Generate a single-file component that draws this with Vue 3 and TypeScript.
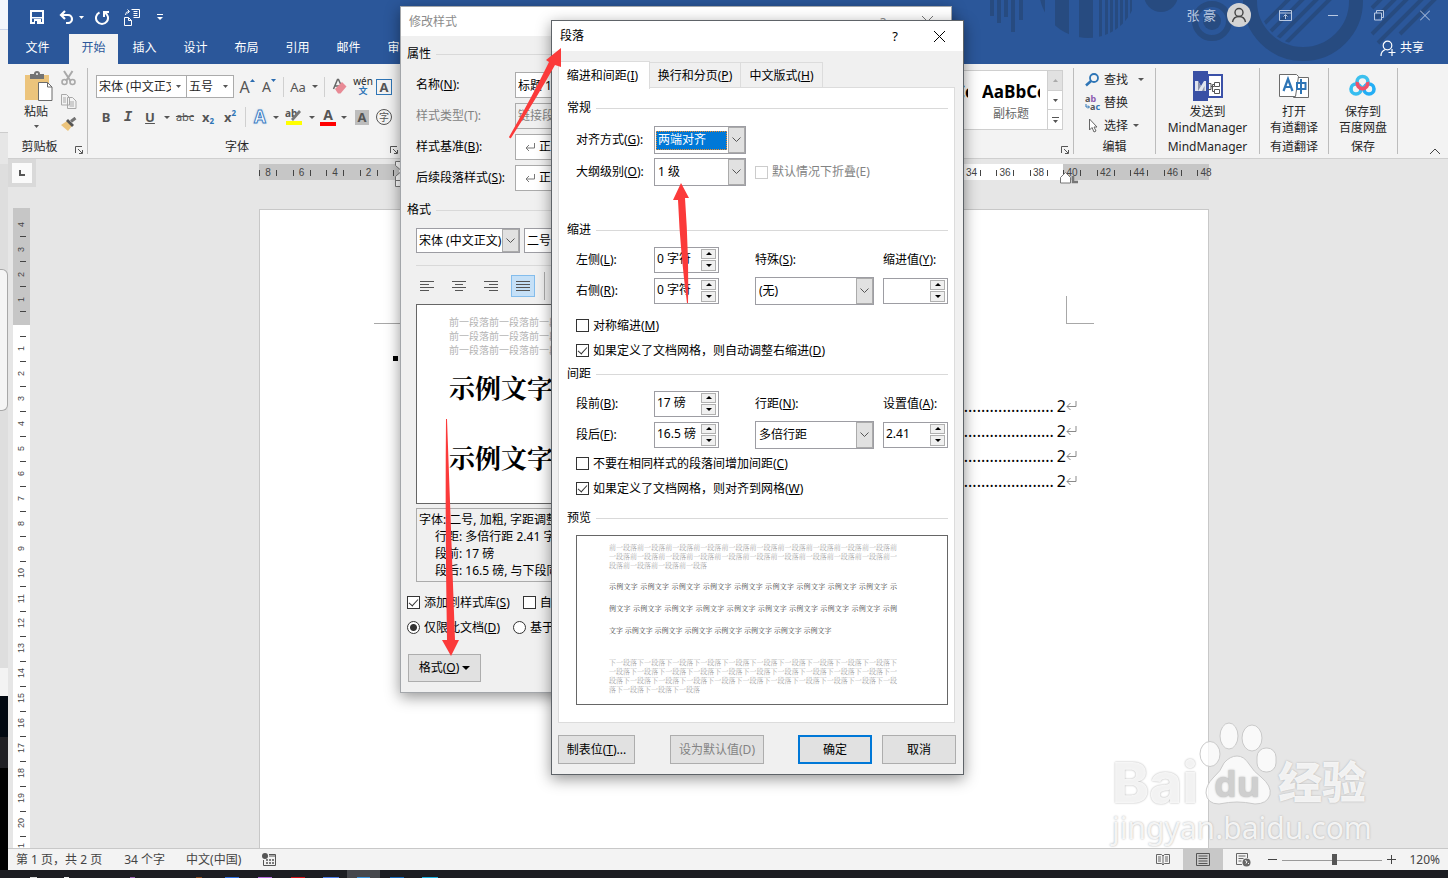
<script setup lang="ts">
import { ref } from 'vue'

const tabs = ['开始', '插入', '设计', '布局', '引用', '邮件', '审阅']
const fontName = ref('宋体 (中文正文)')
const fontSize = ref('五号')
const styleName = ref('标题 1')
const left = ref('0 字符')
const right = ref('0 字符')
const indentBy = ref('')
const before = ref('17 磅')
const after = ref('16.5 磅')
const spacingAt = ref('2.41')
const zoom = ref(120)

const hNumbers = Array.from({ length: 29 }, (_, i) => Math.abs(i * 2 - 8))
const vTop = [4, 3, 2, 1]
const vRest = Array.from({ length: 21 }, (_, i) => i + 1)
const dots = '.'.repeat(60)

const previous = '前一段落'.repeat(24)
const prevLines = [previous.slice(0, 41), previous.slice(41, 82), previous.slice(82, 82 + 18)]
const sampleLines = [
  '示例文字 '.repeat(9) + '示',
  '例文字 ' + '示例文字 '.repeat(8) + '示例',
  '文字 ' + '示例文字 '.repeat(7).trim(),
]
const next = '下一段落'.repeat(34)
const nextLines = [next.slice(0, 41), next.slice(41, 82), next.slice(82, 123), next.slice(123, 136)]
const grayLine = '前一段落'.repeat(6)
const taskIcons = [
  { c: '#d8d8d8', w: 7 }, { c: '#f0f0f0', w: 5 }, { c: '#1c1d22', w: 6 }, { c: '#9a5fb0', w: 5 },
  { c: '#1c1d22', w: 6 }, { c: '#8a4a20', w: 6 }, { c: '#2f6fe0', w: 14 }, { c: '#b56be0', w: 14 },
  { c: '#d01018', w: 14 }, { c: '#4c7de8', w: 16 }, { c: '#3f97e0', w: 13, on: true },
  { c: '#1668b8', w: 14 }, { c: '#1fb0e0', w: 16 },
]
</script>

<template>
  <div class="desktop">
    <div class="screen">
      <aside class="behind">
        <i class="b1"></i><i class="b2"></i><i class="b3"></i>
        <i class="b4"><b></b></i><i class="b5"></i><i class="b6"></i><i class="b7"></i><i class="b8"></i>
      </aside>

      <main class="word">
        <header class="top">
          <svg class="deco" width="468" height="64" viewBox="980 0 468 64" aria-hidden="true">
            <defs><clipPath id="disc"><circle cx="1088" cy="-11" r="49" /></clipPath>
              <clipPath id="ringin"><circle cx="1303" cy="1" r="44" /></clipPath></defs>
            <g fill="#274b80">
              <path d="M990 0h4v16h-4zM997 0h4v23h-4zM1004 0h4v17h-4zM1011 0h4v32h-4zM1019 0h4v20h-4z" />
              <g clip-path="url(#disc)"><path d="M1036 0h9v40h-9zM1055 0h14v40h-14zM1079 0h14v40h-14zM1099 0h3v40h-3zM1105 0h3v40h-3zM1110 0h3v40h-3zM1115 0h3v40h-3zM1120 0h3v40h-3zM1125 0h3v40h-3zM1130 0h2v40h-2z" /></g>
              <circle cx="1161" cy="-5" r="17" /><circle cx="1212" cy="21" r="9" />
            </g>
            <circle cx="1212" cy="21" r="17" fill="none" stroke="#274b80" stroke-width="6" />
            <circle cx="1303" cy="1" r="53" fill="none" stroke="#274b80" stroke-width="14" />
            <g stroke="#274b80" stroke-width="4" clip-path="url(#ringin)"><path d="M1254 34l50-50M1262 40l58-58M1270 46l66-66M1279 50l68-68" /></g>
            <g stroke="#274b80" stroke-width="4"><path d="M1372 8l10-10M1376 18l22-22M1372 34l38-38M1378 43l46-46M1400 34l38-38" /></g>
          </svg>
          <div class="titlebar">
            <div class="quick">
              <button aria-label="保存"><svg width="14" height="14"><path d="M1 1h12v12H1z" fill="none" stroke="#fff" stroke-width="2" /><path d="M1 7h12v1.500H1zM4 9h7v4H4z" fill="#fff" /><path d="M5 11h2v3H5z" fill="#2b579a" /></svg></button>
              <button class="undo" aria-label="撤消"><svg width="15" height="14"><path d="M2 5h7a4 4 0 0 1 0 8H7M6 1L2 5l4 4" fill="none" stroke="#fff" stroke-width="2.200" /></svg></button>
              <button class="uc" aria-label="撤消列表"><svg width="5" height="3"><path d="M0 0h5L2.500 3z" fill="#fff" /></svg></button>
              <button class="redo" aria-label="重复"><svg width="14" height="15"><path d="M4.500 2.500a6 6 0 1 0 5 0M9 7V2h5" fill="none" stroke="#fff" stroke-width="2" /></svg></button>
              <button class="touch" aria-label="插入文档"><svg width="17" height="17"><path d="M1.500 8.500h4l3 3v5h-7zM5.500 8.500v3h3M8.500.500h8v8h-6M10.500 2.500h4M10.500 4.500h4M10.500 6.500h4M2.500 6q0-3.500 3.500-3.500M4.500.500l2 2-2 2" fill="none" stroke="#fff" /></svg></button>
              <button class="more" aria-label="自定义"><svg width="6" height="6"><path d="M0 0h6v1H0zM0 3h6L3 6z" fill="#fff" /></svg></button>
            </div>
            <div class="account">
              <span class="user">张 豪</span>
              <svg class="avatar" width="24" height="24"><circle cx="12" cy="12" r="12" fill="#d4d4d4" /><circle cx="12" cy="9.500" r="4" fill="none" stroke="#444" stroke-width="1.400" /><path d="M5.500 19q1-5.500 6.500-5.500t6.500 5.500" fill="none" stroke="#444" stroke-width="1.400" /></svg>
              <button class="rd" aria-label="功能区显示选项"><svg width="13" height="11"><path d="M.5.5h12v10H.5zM.5 3h12M6.500 9V5M4.500 6.500l2-2 2 2" fill="none" stroke="#b9c9e2" /></svg></button>
              <button aria-label="最小化"><svg width="10" height="11"><path d="M0 5.500h10" stroke="#b9c9e2" /></svg></button>
              <button aria-label="还原"><svg width="10" height="11"><path d="M.5 3h7v7h-7zM2.500 3V.5h7v7h-2" fill="none" stroke="#b9c9e2" /></svg></button>
              <button aria-label="关闭"><svg width="10" height="11"><path d="M0 .5l10 10M10 .5l-10 10" stroke="#b9c9e2" /></svg></button>
            </div>
          </div>
          <nav class="tabs">
            <button class="file">文件</button>
            <button v-for="(t, i) in tabs" :key="t" :class="{ on: i === 0 }">{{ t }}</button>
            <button class="share"><svg width="16" height="17"><circle cx="7.500" cy="5.500" r="4.300" fill="none" stroke="#fff" stroke-width="1.200" /><path d="M1 16q0-5 4.500-6.500M12 9v7M8.500 12.500h7" fill="none" stroke="#fff" stroke-width="1.200" /></svg>共享</button>
          </nav>
        </header>

        <section class="ribbon">
          <div class="group clip">
            <div class="body clipbody">
              <button class="paste">
                <svg width="29" height="30"><path d="M1 4h24v25H1z" fill="#ecc47c" /><path d="M6 3h4q0-3 3-3t3 3h4v5H6z" fill="#737373" /><circle cx="13" cy="3" r="1" fill="#f3f3f3" /><path d="M14.500 11.500h9l4.500 4.500v13.500H14.500z" fill="#fff" stroke="#6b6b6b" /><path d="M23.500 11.500V16H28" fill="none" stroke="#6b6b6b" /></svg>
                <span>粘贴</span>
                <svg class="pc" width="5" height="3"><path d="M0 0h5L2.500 3z" fill="#555" /></svg>
              </button>
              <div class="clipcol">
                <button aria-label="剪切"><svg width="15" height="16"><path d="M3 1l6.500 10M11.500 1L5 11" stroke="#a9a9a9" stroke-width="2" /><circle cx="3.500" cy="12" r="2.500" fill="none" stroke="#a9a9a9" stroke-width="1.600" /><circle cx="11.500" cy="12" r="2.500" fill="none" stroke="#a9a9a9" stroke-width="1.600" /></svg></button>
                <button aria-label="复制"><svg width="16" height="15"><path d="M.5.5h5l3 3V11h-8zM6.500 3.500h5l3.500 3.500v7.500H6.500z" fill="#f3f3f3" stroke="#a9a9a9" /><path d="M2 4h3M2 6h3M2 8h3M8.500 8h4.500M8.500 10h4.500M8.500 12h4.500" stroke="#a9a9a9" /></svg></button>
                <button aria-label="格式刷"><svg width="16" height="14"><path d="M0 8l6-4 5 5-4 5z" fill="#ecc47c" /><path d="M5 4l2-2 6 6-2 2z" fill="#555" /><path d="M10 4.500L14.500 1" stroke="#737373" stroke-width="3" /></svg></button>
              </div>
            </div>
            <footer><span>剪贴板</span><button aria-label="剪贴板选项"><svg width="8" height="8"><path d="M.5 7V.5H7M3 3l4 4M7.500 4v3.500H4" fill="none" stroke="#555" /></svg></button></footer>
          </div>

          <div class="group font">
            <div class="body">
              <div class="r1">
                <span class="rc fn"><select v-model="fontName" aria-label="字体"><option>宋体 (中文正文)</option></select><svg width="5" height="3"><path d="M0 0h5L2.500 3z" fill="#555" /></svg></span>
                <span class="rc fs"><select v-model="fontSize" aria-label="字号"><option>五号</option></select><svg width="5" height="3"><path d="M0 0h5L2.500 3z" fill="#555" /></svg></span>
                <button class="w22 big">A<svg class="sup" width="5" height="4"><path d="M0 3h5L2.500 0z" fill="#2b6cb0" /></svg></button>
                <button class="w22 med">A<svg class="sup" width="5" height="4"><path d="M0 0h5L2.500 3z" fill="#2b6cb0" /></svg></button>
                <i class="sep"></i>
                <button class="w22 aa">Aa</button><button class="car" aria-label="大小写"></button>
                <i class="sep"></i>
                <button class="w24" aria-label="清除格式"><svg width="16" height="17"><path d="M1.500 11L5.500 1.500h1L9 7M3 8h4" fill="none" stroke="#666" stroke-width="1.500" /><path d="M3 11l7-7 4.500 4.500-6 7H6z" fill="#e88a95" /></svg></button>
                <button class="w22 wen"><small>wén</small><b>文</b></button>
                <button class="w20 boxed"><span>A</span></button>
              </div>
              <div class="r2">
                <button class="w22 bold">B</button><button class="w22 ital">I</button><button class="w22 und">U</button><button class="car" aria-label="下划线"></button>
                <button class="w24 strike">abc</button><button class="w22 bold sub">x<small>2</small></button><button class="w22 bold spr">x<small>2</small></button>
                <i class="sep"></i>
                <button class="w20 glow">A</button><button class="car" aria-label="文本效果"></button>
                <button class="w24" aria-label="突出显示"><svg width="18" height="18"><text x="0" y="9" font-size="10" font-weight="700" fill="#555">ab</text><path d="M6 11l8-9 2 2-8 9z" fill="#777" /><path d="M1 13h16v4H1z" fill="#ff0" /></svg></button><button class="car" aria-label="突出显示颜色"></button>
                <button class="w20 acolor">A</button><button class="car" aria-label="字体颜色"></button>
                <button class="w24 shade"><span>A</span></button><button class="w20 circ"><span>字</span></button>
              </div>
            </div>
            <footer><span>字体</span><button aria-label="字体选项"><svg width="8" height="8"><path d="M.5 7V.5H7M3 3l4 4M7.500 4v3.500H4" fill="none" stroke="#555" /></svg></button></footer>
          </div>

          <div class="group styles">
            <div class="body">
              <div class="gallery">
                <button class="style"><b>AaBbCc</b><span>标题</span></button>
                <button class="style"><b>AaBbCc</b><span>副标题</span></button>
                <div class="gs">
                  <button class="off" aria-label="上一行"><svg width="5" height="3"><path d="M0 3h5L2.500 0z" fill="#aaa" /></svg></button>
                  <button aria-label="下一行"><svg width="5" height="3"><path d="M0 0h5L2.500 3z" fill="#555" /></svg></button>
                  <button aria-label="其他"><svg width="7" height="6"><path d="M0 0h7v1H0zM1 3h5L3.500 6z" fill="#555" /></svg></button>
                </div>
              </div>
            </div>
            <footer><span></span><button aria-label="样式选项"><svg width="8" height="8"><path d="M.5 7V.5H7M3 3l4 4M7.500 4v3.500H4" fill="none" stroke="#555" /></svg></button></footer>
          </div>

          <div class="group edit">
            <div class="body">
              <button><svg width="16" height="14"><circle cx="9" cy="5" r="4" fill="none" stroke="#2e75b6" stroke-width="1.800" /><path d="M6 8l-5 4.500" stroke="#2e75b6" stroke-width="2.500" /></svg>查找<i class="tri far"></i></button>
              <button><svg width="16" height="16"><text x="0" y="7" font-size="9" font-weight="700" fill="#555">a<tspan fill="#8e5bb0">b</tspan></text><text x="5" y="15" font-size="9" font-weight="700" fill="#555">a<tspan fill="#2e75b6">c</tspan></text><path d="M1 9v3h3M3 10.500l1.500 1.500L3 13.500" fill="none" stroke="#2e75b6" /></svg>替换</button>
              <button><svg width="16" height="15"><path d="M4.500 1v11l2.500-2.500 2 4.500 2-1-2-4h3z" fill="#fff" stroke="#666" /></svg>选择<i class="tri"></i></button>
            </div>
            <footer><span>编辑</span></footer>
          </div>

          <div class="group mind">
            <button class="body bigbtn">
              <svg width="30" height="30"><path d="M15 4h14v22H15z" fill="#fff" stroke="#3b51a8" stroke-width="2" /><path d="M0 0h15v30H0z" fill="#3950a5" /><path d="M2 10h3l3 5 3-5h2v10H2z" fill="#dfe3ee" /><path d="M5 10l3 5-3 5zM9 20l2.500-5V20z" fill="#8990a8" /><path d="M15 12.500h3v6h-3M18 15.500h3M21.500 11.500h5v4h-5zM21.500 18.500h5v4h-5zM21 13.500h-1.500v7H21" fill="none" stroke="#555" /></svg>
              <span>发送到</span><span>MindManager</span>
            </button>
            <footer><span>MindManager</span></footer>
          </div>
          <div class="group tool">
            <button class="body bigbtn">
              <svg width="30" height="30"><path d="M12.500 6.500h17v20h-15l-2-2z" fill="#fff" stroke="#6b6b6b" /><path d="M.5 3.500h17l2 2-3 20H.5z" fill="#fff" stroke="#6b6b6b" /><path d="M4.500 20L9 8l4.500 12M6 16h6" fill="none" stroke="#2e75b6" stroke-width="2.200" /><path d="M18 12h8.500v6H18zM22 8v15" fill="none" stroke="#2e75b6" stroke-width="2" /></svg>
              <span>打开</span><span>有道翻译</span>
            </button>
            <footer><span>有道翻译</span></footer>
          </div>
          <div class="group tool">
            <button class="body bigbtn">
              <svg width="30" height="30"><circle cx="8" cy="18" r="5" fill="none" stroke="#35bdf0" stroke-width="3.600" /><circle cx="21" cy="18" r="5" fill="none" stroke="#23aef5" stroke-width="3.600" /><circle cx="14.500" cy="11" r="5.500" fill="none" stroke="#3cc0ee" stroke-width="3.600" /><path d="M9.500 11a5.200 5.200 0 1 0 10 0" fill="none" stroke="#f0506a" stroke-width="3.600" /></svg>
              <span>保存到</span><span>百度网盘</span>
            </button>
            <footer><span>保存</span></footer>
          </div>
          <div class="rend"><button aria-label="折叠功能区"><svg width="12" height="7"><path d="M1 6l5-5 5 5" fill="none" stroke="#444" /></svg></button></div>
        </section>

        <section class="doc">
          <div class="vcol">
            <button class="corner" aria-label="制表符"><svg width="6" height="6"><path d="M1 0v5h5" fill="none" stroke="#555" stroke-width="2" /></svg></button>
            <div class="vruler">
              <div class="vdark"><span v-for="n in vTop" :key="n"><em>{{ n }}</em></span></div>
              <div class="vlight"><span v-for="n in vRest" :key="n"><em>{{ n }}</em></span></div>
            </div>
          </div>
          <div class="canvas">
            <div class="hruler">
              <div class="ticks"><span v-for="(n, i) in hNumbers" :key="i">{{ n || '' }}</span></div>
              <svg class="stop" width="18" height="12" aria-hidden="true"><path d="M.5 11V5.500L5.500.5l5 5V11z" fill="#fff" stroke="#777" /><path d="M13 4v6h6" fill="none" stroke="#777" stroke-width="2.500" /></svg>
              <svg class="indent" width="10" height="26" aria-hidden="true"><path d="M.5.500h9v4l-4.500 4-4.500-4zM.5 25.500h9v-10l-4.500-4-4.500 4zM.5 19.500h9" fill="#fff" stroke="#777" /></svg>
            </div>
            <article class="page">
              <div class="marks"><i class="ml"></i><i class="mr"></i></div>
              <div class="heading"><i></i></div>
              <div v-for="k in 4" :key="k" class="toc"><span class="leader">{{ dots }}</span><span>2</span><svg width="11" height="12"><path d="M10 1v5.500H1M4.500 3L1 6.500 4.500 10" fill="none" stroke="#8a8a8a" /></svg></div>
            </article>
          </div>
        </section>

        <footer class="status">
          <span class="pg">第 1 页，共 2 页</span><span class="wc">34 个字</span><span class="lang">中文(中国)</span>
          <svg width="14" height="14"><circle cx="3" cy="3" r="3" fill="#555" /><path d="M7 1.500h6.500v11H1.500V7M7 3h6" fill="none" stroke="#555" /><path d="M4 7h2M7 7h2M10 7h2M4 10h2M7 10h2M10 10h2" stroke="#555" stroke-width="1.500" /></svg>
          <div class="views">
            <button aria-label="阅读视图"><svg width="14" height="13"><path d="M7 2v10M.5 1.500h5L7 3l1.500-1.500h5v9h-5L7 12l-1.500-1.500h-5z" fill="none" stroke="#666" /><path d="M2 4h3M2 6h3M2 8h3M9 4h3M9 6h3M9 8h3" stroke="#666" /></svg></button>
            <button class="on" aria-label="页面视图"><svg width="14" height="13"><path d="M.5.500h13v12H.5zM2.500 3h9M2.500 5.500h9M2.500 8h9M2.500 10.500h9" fill="none" stroke="#555" /></svg></button>
            <button aria-label="Web 版式视图"><svg width="15" height="14"><path d="M6 11.500H.5v-11h11V5M2.500 3h7M2.500 5.500h5M2.500 8h3" fill="none" stroke="#666" /><circle cx="10.500" cy="9.500" r="4" fill="#666" /><path d="M9 7.500l2 1-1 2M12 10l1 1" stroke="#f3f3f3" fill="none" /></svg></button>
          </div>
          <button class="zb" aria-label="缩小"><svg width="9" height="9"><path d="M0 4.500h9" stroke="#444" /></svg></button>
          <input v-model="zoom" type="range" min="10" max="220" aria-label="缩放" />
          <button class="zb" aria-label="放大"><svg width="9" height="9"><path d="M0 4.500h9M4.500 0v9" stroke="#444" /></svg></button>
          <span class="pct">120%</span>
        </footer>
      </main>
    </div>
    <div class="taskbar"><span v-for="(t, i) in taskIcons" :key="i" :class="{ on: t.on }"><i :style="{ width: t.w + 'px', background: t.c }"></i></span></div>

    <section class="dialog modify" aria-label="修改样式">
      <header><h2>修改样式</h2><button aria-label="帮助">?</button><button aria-label="关闭修改样式"><svg width="11" height="11"><path d="M0 0l11 11M11 0L0 11" stroke="#777" /></svg></button></header>
      <div class="mbody">
        <h3>属性</h3>
        <div class="props">
          <label for="m1">名称(<u>N</u>):</label><input id="m1" v-model="styleName" />
          <label for="m2" class="dim">样式类型(T):</label><select id="m2" disabled><option>链接段落和字符</option></select>
          <label for="m3">样式基准(<u>B</u>):</label><span class="ret"><svg width="11" height="10"><path d="M9.500 1v5H1M4 3L1 6l3 3" fill="none" stroke="#777" /></svg><select id="m3"><option>正文</option></select></span>
          <label for="m4">后续段落样式(<u>S</u>):</label><span class="ret"><svg width="11" height="10"><path d="M9.500 1v5H1M4 3L1 6l3 3" fill="none" stroke="#777" /></svg><select id="m4"><option>正文</option></select></span>
        </div>
        <h3 class="fmt">格式</h3>
        <div class="fontrow">
          <span class="combo f1"><select aria-label="样式字体"><option>宋体 (中文正文)</option></select><i><svg width="9" height="6"><path d="M.5.5l4 4 4-4" fill="none" stroke="#555" /></svg></i></span>
          <span class="combo f2"><select aria-label="样式字号"><option>二号</option></select><i></i></span>
        </div>
        <div class="aligns">
          <button aria-label="左对齐"><svg width="15" height="11"><path d="M0 .5h14M0 3.500h9M0 6.500h14M0 9.500h9" stroke="#555" /></svg></button>
          <button aria-label="居中"><svg width="15" height="11"><path d="M0 .5h14M3 3.500h8M0 6.500h14M3 9.500h8" stroke="#555" /></svg></button>
          <button aria-label="右对齐"><svg width="15" height="11"><path d="M0 .5h14M5 3.500h9M0 6.500h14M5 9.500h9" stroke="#555" /></svg></button>
          <button class="on" aria-label="两端对齐"><svg width="15" height="11"><path d="M0 .5h14M0 3.500h14M0 6.500h14M0 9.500h14" stroke="#555" /></svg></button>
          <i></i>
        </div>
        <div class="mprev"><p v-for="k in 3" :key="k">{{ grayLine }}</p><strong>示例文字</strong><strong>示例文字</strong></div>
        <div class="desc"><p>字体: 二号, 加粗, 字距调整</p><p class="in">行距: 多倍行距 2.41 字行</p><p class="in">段前: 17 磅</p><p class="in">段后: 16.5 磅, 与下段同页</p></div>
        <div class="opts"><label><input type="checkbox" checked />添加到样式库(<u>S</u>)</label><label><input type="checkbox" />自动更新</label></div>
        <div class="opts"><label><input type="radio" name="scope" checked />仅限此文档(<u>D</u>)</label><label><input type="radio" name="scope" />基于该模板</label></div>
        <button class="btn fmtbtn"><span>格式(<u>O</u>)</span><svg width="8" height="4"><path d="M0 0h8L4 4z" fill="#000" /></svg></button>
      </div>
    </section>

    <section class="dialog para" aria-label="段落">
      <header><h2>段落</h2><button aria-label="帮助">?</button><button aria-label="关闭段落"><svg width="11" height="11"><path d="M0 0l11 11M11 0L0 11" stroke="#000" /></svg></button></header>
      <div class="ptabs"><button class="on">缩进和间距(<u>I</u>)</button><button>换行和分页(<u>P</u>)</button><button>中文版式(<u>H</u>)</button></div>
      <div class="panel">
        <h3>常规</h3>
        <div class="rows">
          <label for="p1">对齐方式(<u>G</u>):</label><span class="combo"><select id="p1" class="sel"><option>两端对齐</option></select><i><svg width="9" height="6"><path d="M.5.5l4 4 4-4" fill="none" stroke="#555" /></svg></i></span>
          <label for="p2" class="c1">大纲级别(<u>O</u>):</label><span class="combo"><select id="p2"><option>1 级</option></select><i><svg width="9" height="6"><path d="M.5.5l4 4 4-4" fill="none" stroke="#555" /></svg></i></span>
          <label class="chk fold"><input type="checkbox" disabled />默认情况下折叠(E)</label>
        </div>
        <h3 class="h2nd">缩进</h3>
        <div class="grid4">
          <label for="p3">左侧(<u>L</u>):</label><span class="spin"><input id="p3" v-model="left" /><span><button aria-label="增加左侧"></button><button aria-label="减少左侧"></button></span></span>
          <label for="p5">特殊(<u>S</u>):</label><label for="p6">缩进值(<u>Y</u>):</label>
          <label for="p4">右侧(<u>R</u>):</label><span class="spin"><input id="p4" v-model="right" /><span><button aria-label="增加右侧"></button><button aria-label="减少右侧"></button></span></span>
          <span class="combo wide"><select id="p5"><option>(无)</option></select><i><svg width="9" height="6"><path d="M.5.5l4 4 4-4" fill="none" stroke="#555" /></svg></i></span>
          <span class="spin"><input id="p6" v-model="indentBy" /><span><button aria-label="增加缩进值"></button><button aria-label="减少缩进值"></button></span></span>
        </div>
        <div class="checks first"><label class="chk"><input type="checkbox" />对称缩进(<u>M</u>)</label><label class="chk"><input type="checkbox" checked />如果定义了文档网格，则自动调整右缩进(<u>D</u>)</label></div>
        <h3 class="h3rd">间距</h3>
        <div class="grid4">
          <label for="p7">段前(<u>B</u>):</label><span class="spin"><input id="p7" v-model="before" /><span><button aria-label="增加段前"></button><button aria-label="减少段前"></button></span></span>
          <label for="p9">行距(<u>N</u>):</label><label for="p10">设置值(<u>A</u>):</label>
          <label for="p8">段后(<u>F</u>):</label><span class="spin"><input id="p8" v-model="after" /><span><button aria-label="增加段后"></button><button aria-label="减少段后"></button></span></span>
          <span class="combo wide"><select id="p9"><option>多倍行距</option></select><i><svg width="9" height="6"><path d="M.5.5l4 4 4-4" fill="none" stroke="#555" /></svg></i></span>
          <span class="spin"><input id="p10" v-model="spacingAt" /><span><button aria-label="增加设置值"></button><button aria-label="减少设置值"></button></span></span>
        </div>
        <div class="checks"><label class="chk"><input type="checkbox" />不要在相同样式的段落间增加间距(<u>C</u>)</label><label class="chk"><input type="checkbox" checked />如果定义了文档网格，则对齐到网格(<u>W</u>)</label></div>
        <h3 class="h4th">预览</h3>
        <div class="pprev">
          <div class="gray"><p v-for="l in prevLines" :key="l">{{ l }}</p></div>
          <div class="samp"><p v-for="l in sampleLines" :key="l">{{ l }}</p></div>
          <div class="gray"><p v-for="(l, i) in nextLines" :key="i">{{ l }}</p></div>
        </div>
      </div>
      <div class="buttons">
        <button class="btn bt">制表位(<u>T</u>)...</button><button class="btn bd" disabled>设为默认值(D)</button>
        <button class="btn ok">确定</button><button class="btn cancel">取消</button>
      </div>
    </section>

    <svg class="arrows" width="700" height="660" aria-hidden="true">
      <g fill="#fb3a3a">
        <path d="M561 48L546 60l3 2q-17 35-40 75 1 2 2 1 25-39 44-73l6 2z" />
        <path d="M681 183l-8 17h5q2 50 9 103h1q1-50-3-105h4z" />
        <path d="M446 419h1q4 110 8 221h4l-8 16-9-16h5q-2-110-1-221z" />
      </g>
    </svg>

    <div class="mark" aria-hidden="true">
      <div class="brand"><b>Bai</b>
        <svg width="80" height="86"><g fill="#fff" fill-opacity=".75" stroke="#cacaca" stroke-width="1"><ellipse cx="12" cy="33" rx="10" ry="12.500" /><ellipse cx="31" cy="15" rx="9" ry="13" /><ellipse cx="54" cy="17" rx="10" ry="13" /><rect x="59" y="27" width="19" height="24" rx="9" /><path d="M26 42q6-7 13-7t12 8q5 8 12 13 11 9 9 18-3 9-15 9-10-2-18-2t-18 2q-12 0-13-11 0-8 7-15 8-7 11-15z" /></g><text x="39" y="76" text-anchor="middle" font-size="36" font-weight="700" fill="#cfcfcf">du</text></svg>
        <b class="jy">经验</b>
      </div>
      <span>jingyan.baidu.com</span>
    </div>
  </div>
</template>

<style>
html, body { margin: 0; background: #1c1d22; }
</style>

<style scoped>
.desktop { position: relative; height: 100vh; display: flex; flex-direction: column; overflow: hidden; font: 12px/16px "Noto Sans", "Noto Sans CJK SC", sans-serif; color: #262626; }
.desktop * { box-sizing: border-box; }
button, input, select { font: inherit; color: inherit; margin: 0; }
button { padding: 0; border: 0; background: none; white-space: nowrap; }
button svg, label svg { display: block; }
h2, h3, p { margin: 0; font-size: 12px; font-weight: 400; }
.screen { flex: 1; min-height: 0; display: flex; }
.behind { width: 8px; display: flex; flex-direction: column; background: #dedede; }
.behind i { display: block; }
.b1 { height: 30px; background: #f3f6fc; border-bottom: 1px solid #cbd5ea; }
.b2 { height: 103px; background: #f3f3f3; border-bottom: 1px solid #ccc; }
.b3 { height: 31px; background: #e6e6e6; }
.b4 { flex: 1; padding-top: 105px; }
.b4 b { display: block; height: 142px; background: #f5f5f5; border: 1px solid #a8a8a8; border-left: 0; border-radius: 0 6px 6px 0; }
.b5 { height: 28px; background: #f3f3f3; }
.b6 { height: 41px; background: #020912; }
.b7 { height: 31px; background: #202024; }
.b8 { height: 102px; background: #000; }
.word { flex: 1; min-width: 0; display: flex; flex-direction: column; background: #e6e6e6; }
.top { position: relative; background: #2b579a; color: #fff; }
.deco { position: absolute; right: 0; top: 0; }
.titlebar { position: relative; height: 34px; display: flex; justify-content: space-between; padding: 0 18px 0 22px; }
.quick { display: flex; align-items: center; }
.undo { margin-left: 15px; } .uc { margin-left: 5px; } .redo { margin-left: 11px; } .touch { margin-left: 14px; } .more { margin-left: 17px; }
.account { display: flex; align-items: center; gap: 36px; height: 30px; color: #b9c9e2; }
.user { font-size: 13px; margin-right: -25px; }
.rd { margin-left: -8px; }
.tabs { position: relative; display: flex; gap: 2px; height: 30px; }
.tabs button { width: 49px; height: 30px; padding-bottom: 2px; }
.tabs .file { width: 59px; }
.tabs .on { background: #f3f3f3; color: #2b579a; }
.tabs .share { width: auto; margin-left: auto; margin-right: 24px; display: flex; align-items: center; gap: 4px; }
.ribbon { display: flex; height: 95px; background: #f3f3f3; border-bottom: 1px solid #cfcfcf; }
.group { margin: 4px 0; border-right: 1px solid #bcbcbc; display: flex; flex-direction: column; flex: none; }
.group .body { flex: 1; min-height: 0; }
.group footer { display: flex; align-items: center; height: 15px; }
.group footer span { flex: 1; text-align: center; }
.group footer button { width: 16px; padding: 6px 0 0 4px; }
.clip { width: 80px; } .font { width: 314px; border: 0; }
.clipbody { display: flex; padding: 2px 0 0 16px; }
.paste { display: flex; flex-direction: column; align-items: flex-start; padding-top: 1px; }
.paste span { margin: 2px 0 0; line-height: 18px; }
.paste .pc { margin: 4px 0 0 10px; }
.clipcol { display: flex; flex-direction: column; justify-content: flex-start; gap: 8px; margin-left: 8px; }
.r1, .r2 { display: flex; align-items: center; }
.r1 { height: 23px; margin: 7px 0 0 8px; }
.r2 { height: 22px; margin: 8px 0 0 7px; color: #555; }
.rc { display: grid; grid-template-columns: 1fr 15px; align-items: center; height: 23px; background: #fff; border: 1px solid #ababab; }
.rc select { appearance: none; border: 0; background: none; width: 100%; min-width: 0; height: 21px; padding: 0 0 0 2px; overflow: hidden; text-overflow: clip; }
.rc svg { justify-self: center; }
.fn { width: 91px; } .fs { width: 47px; border-left: 0; margin-right: 2px; }
.w20 { width: 20px; } .w22 { width: 22px; } .w24 { width: 24px; }
.w20, .w22, .w24, .car { flex: none; display: flex; align-items: center; justify-content: center; }
.big, .med, .aa { color: #555; font-size: 16px; } .med { font-size: 14px; } .aa { font-size: 13px; }
.sup { align-self: flex-start; }
.sep { width: 1px; height: 20px; background: #d0d0d0; margin: 0 4px; flex: none; }
.r1 .sep { margin: 0 3px; }
.car { width: 12px; } .car::after, .tri { content: ""; border: 3px solid transparent; border-top-color: #555; border-bottom: 0; }
.wen { flex-direction: column; } .wen small { font-size: 10px; line-height: 9px; } .wen b { font-size: 9px; line-height: 10px; color: #2e75b6; }
.boxed span { width: 16px; height: 16px; border: 1px solid #2e75b6; line-height: 14px; font-size: 13px; font-weight: 700; color: #555; }
.bold { font-weight: 700; font-size: 13px; } .ital { font-family: "Liberation Mono", monospace; font-style: italic; font-weight: 700; font-size: 14px; }
.und { font-weight: 700; text-decoration: underline; font-size: 13px; } .strike { text-decoration: line-through; font-size: 11px; }
.sub small, .spr small { font-size: 8px; line-height: 10px; color: #2e75b6; } .sub small { padding-top: 8px; } .spr small { padding-bottom: 8px; }
.glow { font-size: 17px; font-weight: 700; color: #fff; -webkit-text-stroke: 1px #3f7fc4; text-shadow: 0 0 3px #9cc0e8; }
.acolor { font-size: 14px; font-weight: 700; border-bottom: 4px solid #f00; width: 16px; height: 18px; margin: 0 2px; line-height: 14px; }
.shade span { background: #bdbdbd; width: 14px; height: 15px; line-height: 15px; font-size: 13px; font-weight: 700; }
.circ span { width: 16px; height: 16px; border: 1px solid #555; border-radius: 50%; font-size: 10px; line-height: 14px; }
.styles { flex: 1 1 0; min-width: 0; }
.styles .body { display: flex; justify-content: flex-end; padding: 2px 10px 0 0; }
.gallery { display: flex; height: 60px; background: #fff; border: 1px solid #cfcfcf; }
.style { width: 72px; padding: 0 7px; overflow: hidden; text-align: left; display: flex; flex-direction: column; color: #666; }
.style b { font: 700 17px/20px "Open Sans", sans-serif; color: #000; margin-top: 11px; width: 58px; overflow: hidden; }
.style span { align-self: center; margin-top: 4px; }
.gs { width: 15px; display: flex; flex-direction: column; border-left: 1px solid #cfcfcf; }
.gs button { flex: 1; display: flex; align-items: center; justify-content: center; border-bottom: 1px solid #cfcfcf; }
.gs .off { background: #e1e1e1; } .gs button:last-child { border: 0; }
.edit { width: 82px; }
.edit .body button { display: flex; align-items: center; gap: 3px; height: 23px; padding-left: 11px; }
.edit .tri { margin-left: 2px; } .edit .far { margin-left: 7px; }
.mind { width: 104px; } .tool { width: 69px; }
.bigbtn { display: flex; flex-direction: column; align-items: center; padding-top: 3px; }
.bigbtn svg { margin-bottom: 3px; flex: none; }
.rend { width: 50px; display: flex; align-items: flex-end; justify-content: flex-end; padding: 0 7px 3px 0; }
.doc { flex: 1; min-height: 0; display: grid; grid-template-columns: 28px 1fr 16px; grid-template-rows: 100%; }
.vcol { display: flex; flex-direction: column; min-height: 0; }
.corner { width: 28px; height: 28px; background: #fafafa; border: 4px solid #d9d9d9; display: flex; align-items: center; justify-content: center; flex: none; }
.vruler { margin: 21px 0 0 5px; width: 17px; flex: 1; min-height: 0; overflow: hidden; background: #fff; }
.vdark { background: #c6c6c6; height: 117px; padding-top: 4px; } .vlight { padding-top: 11px; }
.vruler span { display: flex; height: 25px; align-items: center; justify-content: center; background: linear-gradient(#444, #444) 7px 24px / 6px 1px no-repeat; }
.vlight span { background-position: 7px 0; }
.vruler em { font: 9px/11px "Liberation Sans", sans-serif; writing-mode: vertical-rl; transform: rotate(180deg); color: #444; }
.canvas { overflow: hidden; display: flex; flex-direction: column; align-items: center; padding-top: 5px; }
.hruler { position: relative; width: 950px; height: 16px; flex: none; background: linear-gradient(90deg, #c6c6c6 140px, #fff 140px, #fff 804px, #c6c6c6 804px); }
.ticks { display: flex; justify-content: space-between; margin-right: -6px; }
.ticks span { width: 18px; height: 16px; text-align: center; font: 10px/17px "Liberation Sans", sans-serif; color: #444; background: linear-gradient(#444, #444) 0 6px / 1px 6px no-repeat, linear-gradient(#444, #444) 17px 6px / 1px 6px no-repeat; }
.ticks span:last-child { background-size: 1px 6px, 0 0; }
.stop { position: absolute; left: 801px; top: 8px; } .indent { position: absolute; left: 136px; top: -3px; }
.page { width: 950px; flex: 1; margin-top: 29px; background: #fff; border: 1px solid #c8c8c8; border-bottom: 0; padding-top: 86px; }
.marks { display: flex; justify-content: space-between; padding: 0 114px; }
.marks i { width: 28px; height: 28px; border-bottom: 1px solid #a8a8a8; } .ml { border-right: 1px solid #a8a8a8; } .mr { border-left: 1px solid #a8a8a8; }
.heading { height: 69px; display: flex; align-items: center; padding-left: 133px; } .heading i { width: 5px; height: 5px; background: #000; }
.toc { display: flex; align-items: center; height: 25px; padding-right: 131px; justify-content: flex-end; font-size: 16px; color: #000; }
.leader { margin-right: 3px; white-space: nowrap; }
.status { height: 22px; background: #f3f3f3; border-top: 1px solid #c8c8c8; display: flex; align-items: center; padding: 0 8px; flex: none; color: #444; }
.wc { margin-left: 22px; } .lang { margin: 0 21px; }
.views { display: flex; margin-left: auto; margin-right: 5px; align-self: stretch; }
.views button { width: 40px; display: flex; align-items: center; justify-content: center; } .views .on { background: #c8c8c8; }
.zb { width: 9px; }
input[type=range] { appearance: none; width: 100px; height: 16px; margin: 0 5px; background: linear-gradient(#9a9a9a, #9a9a9a) 0 8px / 100% 1px no-repeat; }
input[type=range]::-webkit-slider-thumb { appearance: none; width: 5px; height: 11px; background: #555; }
.pct { width: 44px; text-align: right; }
.taskbar { height: 8px; background: #1c1d22; display: flex; flex: none; padding-left: 17px; }
.taskbar span { width: 33px; height: 8px; display: flex; align-items: flex-end; justify-content: center; flex: none; } .taskbar i { height: 1px; } .taskbar .on { background: #46474c; }

.dialog { position: absolute; background: #f0f0f0; color: #000; border: 1px solid #a3a6aa; box-shadow: 0 4px 14px rgba(0, 0, 0, .42); }
.dialog header { background: #fff; height: 30px; display: flex; align-items: center; padding: 0 17px 0 8px; }
.dialog header h2 { flex: 1; } .dialog header button { width: 12px; margin-left: 33px; font-size: 13px; }
.modify { left: 400px; top: 6px; width: 552px; height: 687px; } .modify header { color: #8b8b8b; height: 29px; }
.dialog h3 { display: flex; align-items: center; gap: 5px; height: 20px; } .dialog h3::after { content: ""; flex: 1; height: 1px; background: #d9d9d9; }
.dim { color: #838383; }
.mbody { padding: 8px 6px; }
.props { display: grid; grid-template-columns: 99px 1fr; grid-auto-rows: 31px; align-items: center; margin: 5px 0 0 9px; white-space: nowrap; }
.props > input, .props > select, .ret { height: 26px; width: 100%; border: 1px solid #ababab; background: #fff; padding: 0 2px; appearance: none; }
.props > select:disabled { background: #f0f0f0; color: #838383; opacity: 1; border-color: #ababab; }
.ret { display: flex; align-items: center; padding-left: 9px; gap: 3px; } .ret select { appearance: none; border: 0; background: none; flex: 1; }
.fmt { margin-top: 7px; }
.fontrow { display: flex; gap: 4px; margin: 8px 0 0 9px; }
.combo { display: grid; grid-template-columns: 1fr 17px; height: 28px; width: 92px; background: #fff; border: 1px solid #9d9da3; }
.combo select { appearance: none; border: 0; background: none; min-width: 0; width: 100%; padding: 0 0 0 3px; text-overflow: clip; overflow: hidden; }
.combo i { background: #e1e1e1; border: 1px solid #ababab; display: flex; align-items: center; justify-content: center; }
.combo select.sel { background: #0078d7; color: #fff; height: 19px; align-self: center; margin-left: 1px; padding-left: 2px; width: 71px; outline: 1px dotted #f08a24; outline-offset: -1px; }
.f1 { width: 104px; height: 25px; } .f2 { width: 80px; height: 25px; }
.combo.f1 select, .combo.f2 select { padding-left: 2px; }
.aligns { margin: 12px 0 0 9px; border-top: 1px solid #d9d9d9; padding: 4px 0 0; display: flex; align-items: center; height: 37px; }
.aligns button { width: 24px; height: 22px; display: flex; align-items: center; justify-content: center; margin-right: 8px; } .aligns button:first-child { margin-left: -1px; }
.aligns .on { background: #c5e0f7; border: 1px solid #84bdec; margin-right: 9px; } .aligns i { width: 1px; height: 28px; background: #ababab; }
.mprev { margin: 2px 0 0 9px; height: 200px; background: #fff; border: 1px solid #666; padding: 10px 0 0 32px; overflow: hidden; }
.mprev p { font-size: 10px; line-height: 14px; color: #b4b4b4; white-space: nowrap; }
.mprev strong { display: block; font: 700 26px/30px "Noto Serif CJK SC", "Noto Sans CJK SC", serif; margin: 15px 0 40px; }
.desc { margin: 4px 0 0 9px; height: 74px; border: 1px solid #ababab; padding: 2px; } .desc p { line-height: 17px; } .desc .in { padding-left: 16px; }
.opts { display: flex; gap: 13px; height: 25px; } .opts:nth-last-child(3) { margin-top: 8px; }
.opts label, .chk { display: flex; align-items: center; white-space: nowrap; } .opts input { margin-right: 4px; }
input[type=checkbox], input[type=radio] { appearance: none; width: 13px; height: 13px; border: 1px solid #333; background: #fff; flex: none; }
input[type=radio] { border-radius: 50%; } input[type=radio]:checked { background: radial-gradient(circle, #333 0 3px, #fff 4px); }
input[type=checkbox]:checked::after { content: ""; display: block; width: 8px; height: 4px; margin: 2px 0 0 1px; border: solid #333; border-width: 0 0 1px 1px; transform: rotate(-48deg); }
input[type=checkbox]:disabled { border-color: #ccc; }
.btn { background: #e1e1e1; border: 1px solid #adadad; height: 29px; }
.fmtbtn { width: 73px; display: flex; align-items: center; justify-content: center; gap: 3px; margin: 14px 0 0 1px; height: 28px; }

.para { left: 551px; top: 20px; width: 413px; height: 755px; border-color: #5e6368; }
.ptabs { display: flex; align-items: flex-end; padding: 9px 0 0 6px; position: relative; height: 37px; }
.ptabs button { border: 1px solid #dcdcdc; border-left: 0; height: 26px; width: 91px; border-bottom: 0; }
.ptabs button:last-child { width: 82px; } .ptabs .on { width: 92px; background: #fff; height: 28px; border-left: 1px solid #dcdcdc; margin-bottom: -1px; padding-right: 3px; }
.panel { margin: -1px 8px 0 6px; border: 1px solid #dcdcdc; background: #fff; padding: 10px 6px 17px 8px; }
.rows, .grid4 { display: grid; white-space: nowrap; align-items: center; padding-left: 9px; }
.rows { grid-template-columns: 78px 101px 1fr; grid-auto-rows: 32px; margin-top: 6px; } .c1 { grid-column: 1; }
.chk input { margin-right: 4px; } .fold { color: #838383; }
.h2nd { margin-top: 32px; } .h3rd { margin-top: 1px; } .h4th { margin-top: 7px; }
.grid4 { grid-template-columns: 78px 101px 128px 1fr; grid-auto-rows: 31px; margin-top: 4px; }
.combo.wide { width: 119px; }
.spin { display: grid; grid-template-columns: 1fr 15px; width: 65px; height: 26px; border: 1px solid #9d9da3; background: #fff; padding-right: 2px; }
.spin input { border: 0; background: none; min-width: 0; width: 100%; padding: 0 0 2px 2px; outline: 0; }
.spin > span { display: flex; flex-direction: column; gap: 1px; padding: 1px 0; }
.spin button { flex: 1; background: #f0f0f0; border: 1px solid #b0b0b0; display: flex; align-items: center; justify-content: center; }
.spin button::after { content: ""; border: 3px solid transparent; border-top: 0; border-bottom-color: #000; } .spin button:last-child::after { border-top: 3px solid #000; border-bottom: 0; }
.checks { padding-left: 9px; margin-top: 1px; } .checks.first { margin-top: 7px; } .checks .chk { height: 25px; }
.pprev { margin: 7px 0 0 9px; border: 1px solid #666; height: 170px; padding: 7px 50px 0 32px; font-family: "Noto Serif CJK SC", "Noto Sans CJK SC", serif; }
.pprev p { font-size: 7px; white-space: nowrap; text-align: justify; text-align-last: justify; } .pprev p:last-child { text-align-last: left; }
.gray p { line-height: 9px; color: #a8a8a8; } .samp { padding: 5px 0 17px; } .samp p { line-height: 22px; color: #333; }
.buttons { display: flex; padding: 12px 7px 0 6px; } .bt { width: 77px; } .bd { width: 94px; margin-left: 35px; color: #838383; } .ok { width: 74px; margin-left: auto; border: 2px solid #0078d7; } .cancel { width: 74px; margin-left: 10px; }

.arrows { position: absolute; left: 0; top: 0; pointer-events: none; }
.mark { position: absolute; right: 76px; bottom: 33px; width: 260px; color: rgba(255, 255, 255, .85); text-shadow: 0 0 2px #aaa; pointer-events: none; }
.brand { display: flex; align-items: flex-end; height: 86px; } .brand b { font: 800 56px/56px Inter, "Noto Sans CJK SC", sans-serif; margin-bottom: -4px; }
.brand .jy { font: 900 44px/48px "Noto Sans CJK SC", sans-serif; margin: 0 0 3px 0; } .brand svg { flex: none; }
.mark > span { display: block; font-size: 30px; line-height: 34px; margin-top: 4px; }
</style>
